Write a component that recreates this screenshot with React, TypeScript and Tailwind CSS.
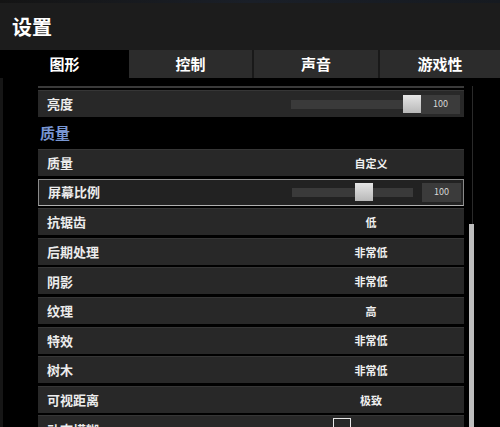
import React from "react";

const font = { fontFamily: '"Noto Sans CJK SC", "Noto Sans", sans-serif' };

type Row =
  | { kind: "value"; label: string; value: string }
  | { kind: "slider"; label: string; pos: number; active?: boolean }
  | { kind: "check"; label: string };

const quality: Row[] = [
  { kind: "value", label: "质量", value: "自定义" },
  { kind: "slider", label: "屏幕比例", pos: 63, active: true },
  { kind: "value", label: "抗锯齿", value: "低" },
  { kind: "value", label: "后期处理", value: "非常低" },
  { kind: "value", label: "阴影", value: "非常低" },
  { kind: "value", label: "纹理", value: "高" },
  { kind: "value", label: "特效", value: "非常低" },
  { kind: "value", label: "树木", value: "非常低" },
  { kind: "value", label: "可视距离", value: "极致" },
  { kind: "check", label: "动态模糊" },
];

function Slider({ pos }: { pos: number }) {
  return (
    <div className="flex items-center">
      <div className="relative h-[9px] w-[121px] bg-[#3a3a3a]">
        <div
          className="absolute top-1/2 h-[18px] w-[18px] -translate-y-1/2 bg-gradient-to-b from-[#e6e6e6] to-[#b8b8b8]"
          style={{ left: pos }}
        />
      </div>
      <div className="ml-[9px] flex h-[19px] w-[39px] items-center justify-center bg-[#3b3b3b] text-[9px] text-[#d8d8d8]">
        100
      </div>
    </div>
  );
}

function SettingRow({ row }: { row: Row }) {
  const active = row.kind === "slider" && row.active;
  return (
    <div
      className={
        "flex h-[27px] shrink-0 items-center " +
        (active
          ? "border border-[#8a8a8a] border-b-[#b0b0b0] bg-[#222222]"
          : "border-t border-[#363636] bg-[#282828]")
      }
    >
      <div className="w-[242px] shrink-0 pl-[9px] text-[13px] font-bold text-[#ececec]">{row.label}</div>
      {row.kind === "value" && (
        <div className="flex-1 pr-[2px] text-center text-[11px] font-bold text-[#f0f0f0]">{row.value}</div>
      )}
      {row.kind === "slider" && (
        <div className="flex-1 pl-[11px]">
          <Slider pos={row.pos} />
        </div>
      )}
      {row.kind === "check" && (
        <div className="flex flex-1 self-start pl-[53px] pt-[2px]">
          <div className="h-[18px] w-[18px] border-[1.5px] border-[#e8e8e8]" />
        </div>
      )}
    </div>
  );
}

export default function App() {
  return (
    <div className="h-[427px] w-[500px] overflow-hidden bg-black" style={font}>
      <div className="h-[3px] bg-gradient-to-r from-[#141414] via-[#1a1f28] to-[#161a20]" />
      <div className="flex h-[47px] items-center bg-[#1c1c1c] pl-[12px] text-[20px] font-bold text-white">
        设置
      </div>
      <div className="flex h-[28px] bg-[#1c1c1c]">
        <div className="flex w-[129px] items-center justify-center bg-black text-[15px] font-bold text-white">图形</div>
        <div className="flex w-[125px] items-center justify-center border-r-2 border-[#191919] bg-[#2c2c2c] text-[15px] font-bold text-white">控制</div>
        <div className="flex w-[126px] items-center justify-center border-r-2 border-[#191919] bg-[#2c2c2c] text-[15px] font-bold text-white">声音</div>
        <div className="flex flex-1 items-center justify-center bg-[#2c2c2c] text-[15px] font-bold text-white">游戏性</div>
      </div>
      <div className="flex h-[349px] border-l-[3px] border-[#161616]">
        <div className="w-[35px] shrink-0" />
        <div className="flex w-[426px] shrink-0 flex-col pt-[8px]">
          <div className="h-[2px] shrink-0 bg-[#3a3a3a]" />
          <div className="mt-[2px] flex h-[27px] shrink-0 items-center border-t border-[#363636] bg-[#282828]">
            <div className="w-[242px] shrink-0 pl-[9px] text-[13px] font-bold text-[#ececec]">亮度</div>
            <div className="flex-1 pl-[11px]">
              <Slider pos={112} />
            </div>
          </div>
          <div className="flex h-[32px] shrink-0 items-center pl-[2px] pt-[1px] text-[15px] font-bold text-[#7896d2]">质量</div>
          <div className="flex shrink-0 flex-col gap-[2.6px]">
            {quality.map((r) => (
              <SettingRow key={r.label} row={r} />
            ))}
          </div>
        </div>
        <div className="relative ml-[5px] w-[5px] shrink-0">
          <div className="absolute left-[3px] top-[8px] h-full w-px bg-[#2a2a2a]" />
          <div className="absolute left-0 top-[146px] h-[220px] w-[5px] bg-[#bdbdbd]" />
        </div>
      </div>
    </div>
  );
}
